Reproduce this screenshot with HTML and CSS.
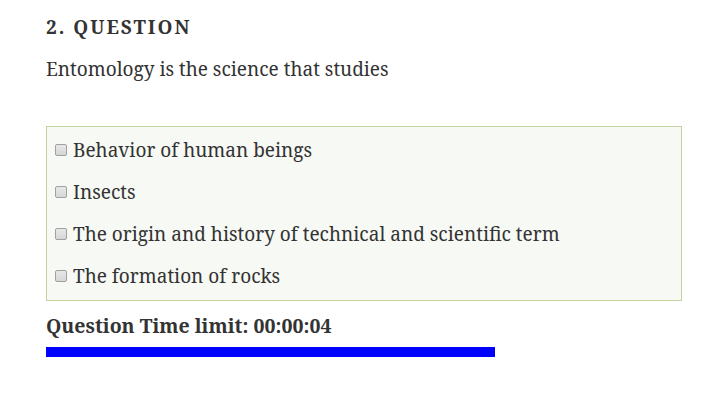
FILE: index.html
```html
<!DOCTYPE html>
<html>
<head>
<meta charset="utf-8">
<link rel="stylesheet" href="styles.css">
</head>
<body>
<div class="quiz">
  <h3 class="q-title">2. QUESTION</h3>
  <p class="q-text">Entomology is the science that studies</p>
  <div class="answers">
    <label class="answer"><input type="checkbox"> Behavior of human beings</label>
    <label class="answer"><input type="checkbox"> Insects</label>
    <label class="answer"><input type="checkbox"> The origin and history of technical and scientific term</label>
    <label class="answer"><input type="checkbox"> The formation of rocks</label>
  </div>
  <div class="time-label">Question Time limit: 00:00:04</div>
  <div class="time-bar" style="width:449px"></div>
</div>
</body>
</html>
```
FILE: styles.css
```css
html, body { margin: 0; padding: 0; background: #fff; }
body { font-family: "Noto Serif", "DejaVu Serif", serif; color: #333; }
.quiz { padding: 12px 30px 0 46px; width: 636px; }
.q-title { margin: 0; font-size: 19px; font-weight: 700; letter-spacing: 2px; line-height: 30px; color: #333; }
.q-text { margin: 15px 0 0; font-size: 19px; line-height: 24px; }
.answers { margin-top: 45px; border: 1px solid #c5d3a1; background: #f7f9f4; padding: 10px 8px 11px; display: flex; flex-direction: column; gap: 16px; }
.answer { display: flex; align-items: center; font-size: 19px; line-height: 26px; }
.answer input {
  -webkit-appearance: none; appearance: none;
  margin: 0 6px 0 0; width: 12px; height: 12px;
  border: 1px solid #a0a0a0; border-radius: 2px;
  background: linear-gradient(#e8e8e8, #d6d6d6);
  box-sizing: border-box;
}
.time-label { font-weight: 700; font-size: 19.5px; line-height: 24px; margin-top: 13px; }
.time-bar { height: 10px; background: #0000ff; margin-top: 9px; }
```
